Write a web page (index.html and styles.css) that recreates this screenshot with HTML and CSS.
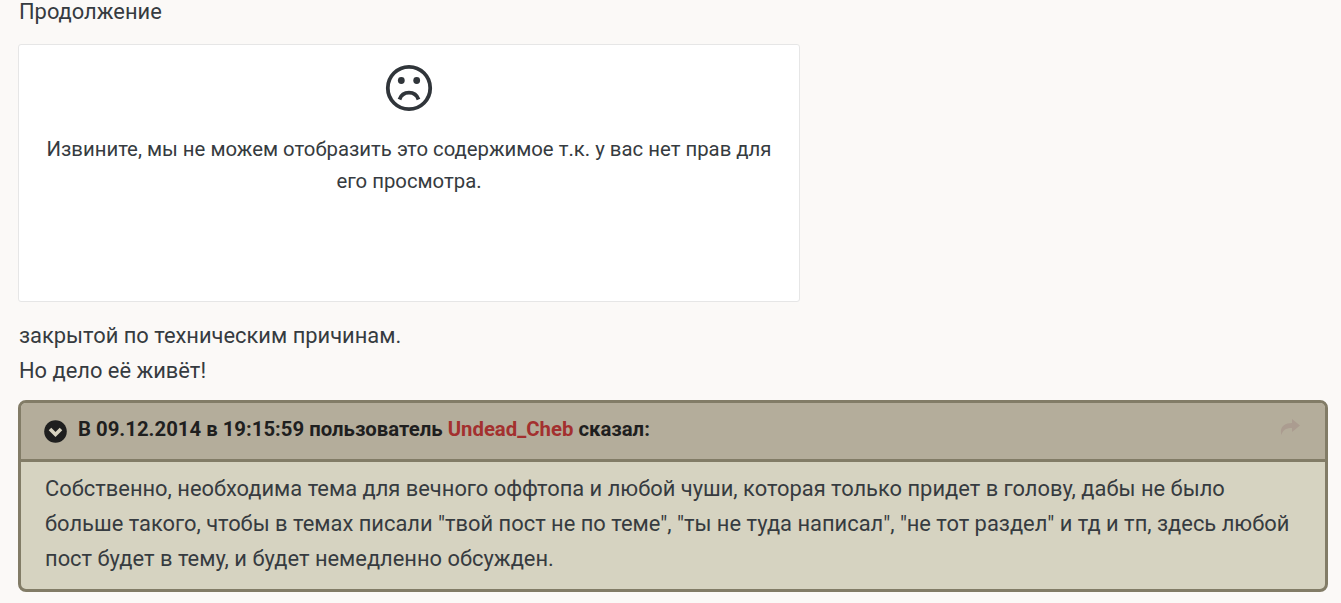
FILE: index.html
```html
<!DOCTYPE html>
<html lang="ru">
<head>
<meta charset="utf-8">
<title>Продолжение</title>
<link rel="stylesheet" href="styles.css">
</head>
<body>
<main class="post">
  <p class="line">Продолжение</p>
  <div class="denied">
    <svg class="sad" viewBox="0 0 48 48" width="48" height="48" aria-hidden="true">
      <circle cx="24" cy="24" r="21.2" fill="none" stroke="#30353a" stroke-width="3.800"/>
      <circle cx="16.300" cy="16.500" r="3.400" fill="#30353a"/>
      <circle cx="31.700" cy="16.500" r="3.400" fill="#30353a"/>
      <path d="M14.500 35.500c1.500-4.300 5-6.800 9.500-6.800s8 2.500 9.500 6.800" fill="none" stroke="#30353a" stroke-width="3.800"/>
    </svg>
    <p class="denied-text">Извините, мы не можем отобразить это содержимое т.к. у вас нет прав для его просмотра.</p>
  </div>
  <p class="line">закрытой по техническим причинам.</p>
  <p class="line">Но дело её живёт!</p>
  <blockquote class="quote">
    <div class="quote-head">
      <span class="toggle">
        <svg viewBox="0 0 23 23" width="23" height="23" aria-hidden="true">
          <circle cx="11.500" cy="11.500" r="11.300" fill="#1f1f1f"/>
          <path d="M6 9l5.500 5.500L17 9" fill="none" stroke="#d8d3c0" stroke-width="3.600"/>
        </svg>
      </span>
      <span class="quote-title">В 09.12.2014 в 19:15:59 пользователь <a class="author" href="#">Undead_Cheb</a> сказал:</span>
      <svg class="share" viewBox="0 0 20 16" width="20" height="16" aria-hidden="true">
        <path d="M12 0l8 6.500-8 6.500V9C7 9 3 10 1.500 16 -1 9 4 4 12 4z" fill="#ab9c90"/>
      </svg>
    </div>
    <div class="quote-body">Собственно, необходима тема для вечного оффтопа и любой чуши, которая только придет в голову, дабы не было больше такого, чтобы в темах писали "твой пост не по теме", "ты не туда написал", "не тот раздел" и тд и тп, здесь любой пост будет в тему, и будет немедленно обсужден.</div>
  </blockquote>
</main>
</body>
</html>
```

FILE: styles.css
```css
* { box-sizing: border-box; }
html, body { margin: 0; height: 100%; overflow: hidden; }
body {
  background: #fbf9f7;
  color: #363b40;
  font-family: Roboto, "Noto Sans", sans-serif;
  font-size: 21.88px;
  line-height: 35px;
}
.post {
  margin-top: -6px;
  padding: 0 13px 0 18px;
}
.line { margin: 0; padding-left: 1px; }
.denied {
  width: 782px;
  height: 258px;
  margin: 15px 0 16px;
  padding: 19px 20px 0;
  background: #fff;
  border: 1px solid #e6e6e6;
  border-radius: 3px;
  text-align: center;
}
.sad { display: block; margin: 0 auto; }
.denied-text {
  margin: 21px 0 0;
  font-size: 20.33px;
  line-height: 32px;
}
.quote {
  margin: 12px 0 0;
  background: #d6d3c1;
  border: 3px solid #827c67;
  border-radius: 8px;
  overflow: hidden;
}
.quote-head {
  display: flex;
  align-items: center;
  height: 59px;
  padding: 0 25px 0 23px;
  background: #b4ad9b;
  border-bottom: 3px solid #827c67;
  font-size: 20.33px;
  font-weight: 700;
  color: #1f1f1f;
}
.toggle { display: flex; margin-right: 11px; }
.quote-title { flex: 1; margin-bottom: 3px; }
.share { margin-bottom: 8px; }
.author { color: #a3302f; text-decoration: none; }
.quote-body {
  padding: 9px 24px 13px;
}
```
